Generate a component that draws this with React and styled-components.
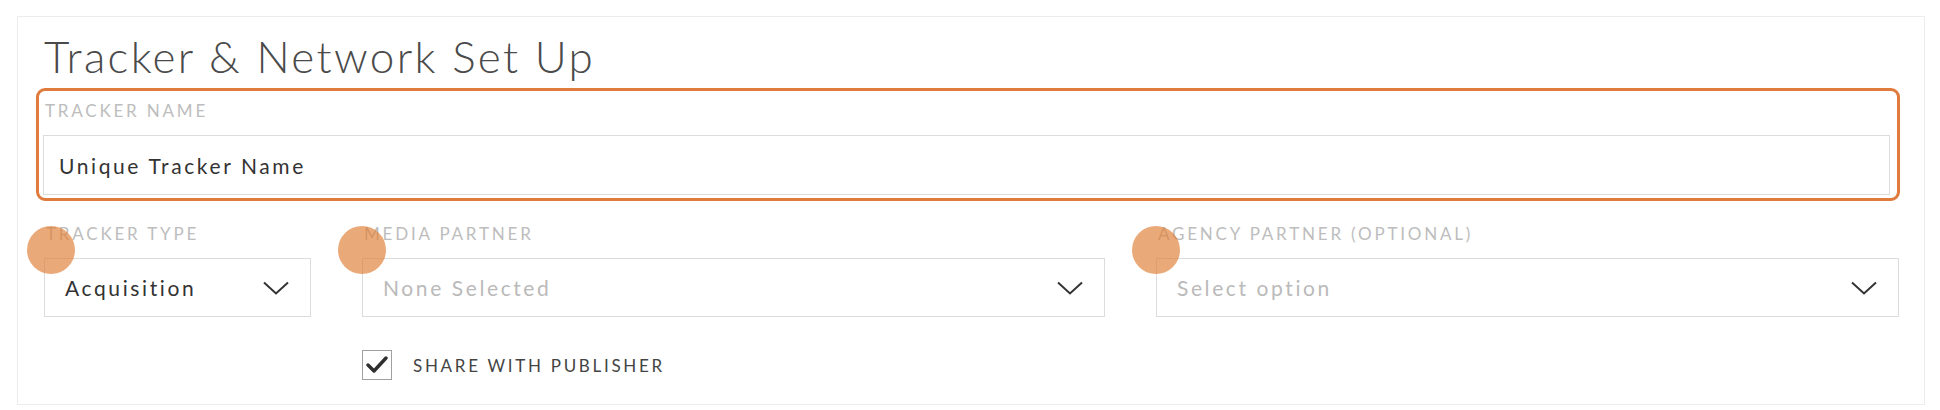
import React from "react";
import styled, { createGlobalStyle } from "styled-components";

const GlobalStyle = createGlobalStyle`
  html, body { margin: 0; padding: 0; background: #ffffff; }
  body { font-family: "Lato", "Open Sans", sans-serif; }
  * { box-sizing: border-box; }
`;

const Panel = styled.section`
  margin: 16px 15px 0 17px;
  height: 389px;
  border: 1px solid #ececec;
  padding: 0 24px 0 18px;
  background: #fff;
`;

const Title = styled.h2`
  margin: 0;
  padding: 17px 0 0 8px;
  height: 71px;
  font-family: "Lato", sans-serif;
  font-weight: 300;
  font-size: 44px;
  line-height: 44px;
  color: #4a4a4a;
  letter-spacing: 2.35px;
`;

const Highlight = styled.div`
  border: 3px solid #de7b3d;
  border-radius: 9px;
  padding: 10px 7px 3px 4px;
  height: 113px;
`;

const Label = styled.div`
  font-family: "Lato", sans-serif;
  font-size: 17px;
  line-height: 20px;
  letter-spacing: 2.8px;
  text-transform: uppercase;
  white-space: nowrap;
  color: #bdbdbd;
  padding-left: 2px;
  margin-bottom: 14px;
`;

const TextInput = styled.div`
  height: 60px;
  border: 1px solid #dcdcdc;
  display: flex;
  align-items: center;
  padding-left: 15px;
  font-family: "Lato", sans-serif;
  font-size: 21px;
  letter-spacing: 2.6px;
  color: #333;
`;

const Row = styled.div`
  display: grid;
  grid-template-columns: 267px 1fr 1fr;
  column-gap: 51px;
  padding: 23px 1px 0 8px;
`;

const Field = styled.div`
  position: relative;
`;

const Select = styled.div`
  height: 59px;
  border: 1px solid #dcdcdc;
  display: flex;
  align-items: center;
  justify-content: space-between;
  padding: 0 21px 0 20px;
  font-family: "Lato", sans-serif;
  font-size: 21px;
  letter-spacing: 2.6px;
  color: ${(p) => (p.$placeholder ? "#bababa" : "#333")};
`;

const Touch = styled.span`
  position: absolute;
  left: ${(p) => (p.$dx || 0) - 24}px;
  top: 2px;
  width: 48px;
  height: 48px;
  border-radius: 50%;
  background: rgba(224, 128, 58, 0.68);
  pointer-events: none;
`;

const CheckRow = styled.label`
  display: flex;
  align-items: center;
  gap: 21px;
  margin-top: 33px;
  font-family: "Lato", sans-serif;
  font-size: 17px;
  letter-spacing: 2.7px;
  color: #444;
`;

const Box = styled.span`
  width: 30px;
  height: 30px;
  border: 1.5px solid #a0a0a0;
  display: flex;
  align-items: center;
  justify-content: center;
`;

const Chevron = () => (
  <svg width="26" height="14" viewBox="0 0 26 14" fill="none">
    <path d="M1 1.5 L13 12.5 L25 1.5" stroke="#333" strokeWidth="2" />
  </svg>
);

const Check = () => (
  <svg width="22" height="18" viewBox="0 0 22 18" fill="none">
    <path d="M2 9 L8 15 L20 2" stroke="#2e2e2e" strokeWidth="3.4" strokeLinecap="round" strokeLinejoin="round" />
  </svg>
);

export default function App() {
  return (
    <>
      <GlobalStyle />
      <Panel>
        <Title>Tracker &amp; Network Set Up</Title>
        <Highlight>
          <Label>Tracker Name</Label>
          <TextInput>Unique Tracker Name</TextInput>
        </Highlight>
        <Row>
          <Field>
            <Label>Tracker Type</Label>
            <Select>
              <span>Acquisition</span>
              <Chevron />
            </Select>
            <Touch $dx={7} />
          </Field>
          <Field>
            <Label>Media Partner</Label>
            <Select $placeholder>
              <span>None Selected</span>
              <Chevron />
            </Select>
            <Touch $dx={0} />
            <CheckRow>
              <Box>
                <Check />
              </Box>
              SHARE WITH PUBLISHER
            </CheckRow>
          </Field>
          <Field>
            <Label>Agency Partner (Optional)</Label>
            <Select $placeholder>
              <span>Select option</span>
              <Chevron />
            </Select>
            <Touch $dx={0} />
          </Field>
        </Row>
      </Panel>
    </>
  );
}
